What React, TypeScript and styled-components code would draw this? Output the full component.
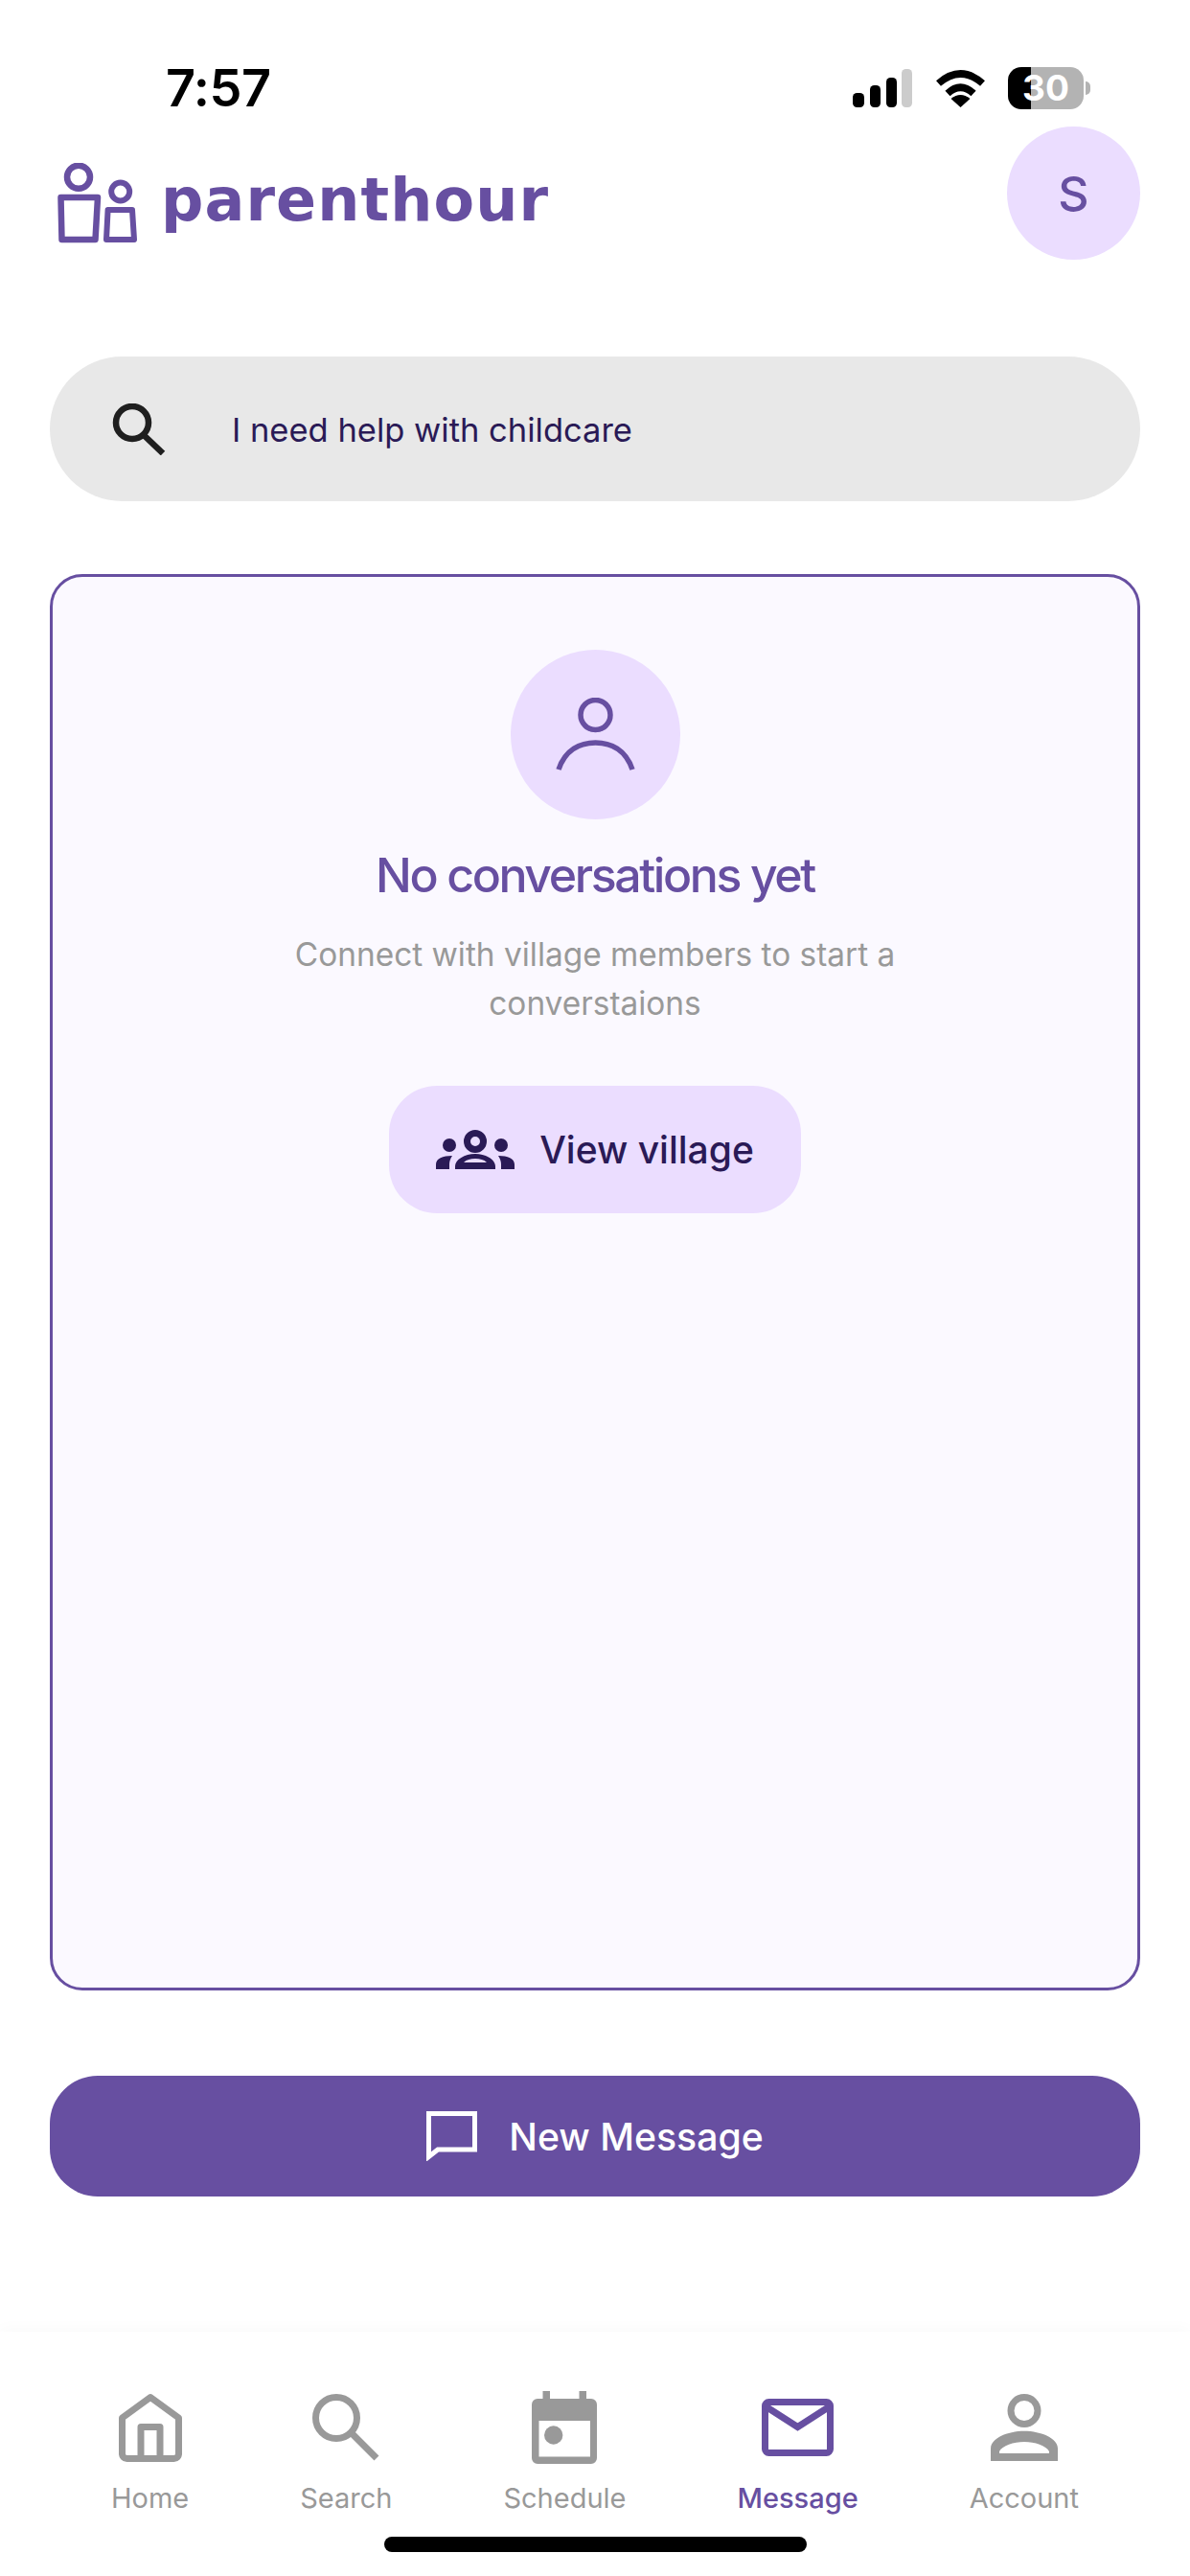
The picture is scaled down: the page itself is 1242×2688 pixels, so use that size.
import React from "react";
import styled, { createGlobalStyle } from "styled-components";

const PURPLE = "#674fa1";
const LILAC = "#ebddff";
const INK = "#2a1a56";
const GREY = "#999999";

const Global = createGlobalStyle`
  html, body { margin: 0; padding: 0; background: #fff; }
  body { font-family: Inter, "Liberation Sans", sans-serif; }
  * { box-sizing: border-box; }
`;

const Page = styled.div`
  width: 1242px;
  height: 2688px;
  display: flex;
  flex-direction: column;
  position: relative;
  overflow: hidden;
  background: #fff;
`;

const StatusBar = styled.div`
  height: 44px;
  margin-top: 70px;
  padding: 0 111px 0 173px;
  display: flex;
  align-items: center;
  justify-content: space-between;
`;

const Time = styled.div`
  font-size: 54px;
  font-weight: 600;
  line-height: 44px;
  color: #000;
  letter-spacing: -0.5px;
`;

const StatusIcons = styled.div`
  display: flex;
  align-items: center;
  gap: 23.5px;
`;

const Battery = styled.div`
  width: 79px;
  height: 44px;
  border-radius: 14px;
  background: linear-gradient(to right, #000 0 24px, #b3b3b3 24px 100%);
  color: #fff;
  font-size: 37px;
  font-weight: 700;
  line-height: 44px;
  text-align: center;
  position: relative;
  &::after {
    content: "";
    position: absolute;
    right: -7px;
    top: 15px;
    width: 5px;
    height: 14px;
    background: #b3b3b3;
    border-radius: 0 5px 5px 0;
  }
`;

const Header = styled.header`
  margin-top: 18px;
  padding: 0 52px 0 58px;
  display: flex;
  justify-content: space-between;
  align-items: flex-start;
`;

const Logo = styled.div`
  margin-top: 38px;
  display: flex;
  align-items: flex-end;
  gap: 24px;
`;

const Wordmark = styled.div`
  font-family: "DejaVu Sans", sans-serif;
  font-size: 62px;
  font-weight: 700;
  line-height: 70px;
  letter-spacing: 1.1px;
  color: ${PURPLE};
  margin-bottom: 10px;
`;

const Avatar = styled.div`
  width: 139px;
  height: 139px;
  border-radius: 50%;
  background: ${LILAC};
  color: ${PURPLE};
  font-size: 50px;
  font-weight: 500;
  display: flex;
  align-items: center;
  justify-content: center;
`;

const SearchBar = styled.div`
  margin: 101px 52px 0;
  height: 151px;
  border-radius: 76px;
  background: #e8e8e8;
  padding: 0 0 0 65px;
  display: flex;
  align-items: center;
  gap: 69px;
`;

const SearchText = styled.span`
  font-size: 34.5px;
  color: ${INK};
  margin-top: 2px;
`;

const Card = styled.section`
  margin: 76px 52px 0;
  height: 1478px;
  border: 3px solid ${PURPLE};
  border-radius: 34px;
  background: #fbf9ff;
  padding-top: 76px;
  display: flex;
  flex-direction: column;
  align-items: center;
`;

const IconCircle = styled.div`
  width: 177px;
  height: 177px;
  border-radius: 50%;
  background: ${LILAC};
  display: flex;
  align-items: center;
  justify-content: center;
`;

const Title = styled.h2`
  margin: 28px 0 0;
  font-size: 50px;
  line-height: 60px;
  font-weight: 500;
  letter-spacing: -2.4px;
  color: ${PURPLE};
`;

const Body = styled.p`
  margin: 28px 0 0;
  width: 680px;
  font-size: 33.4px;
  line-height: 51px;
  text-align: center;
  color: ${GREY};
`;

const VillageButton = styled.button`
  margin-top: 60px;
  width: 430px;
  height: 133px;
  border: none;
  border-radius: 50px;
  background: ${LILAC};
  color: ${INK};
  font-family: inherit;
  font-size: 39px;
  font-weight: 500;
  display: flex;
  align-items: center;
  justify-content: center;
  gap: 26px;
`;

const NewMessage = styled.button`
  margin: 89px 52px 0;
  height: 126px;
  border: none;
  border-radius: 50px;
  background: ${PURPLE};
  color: #fff;
  font-family: inherit;
  font-size: 39.2px;
  font-weight: 500;
  display: flex;
  align-items: center;
  justify-content: center;
  gap: 33px;
`;

const Nav = styled.nav`
  margin-top: 141px;
  height: 255px;
  padding-top: 62px;
  display: flex;
  justify-content: space-evenly;
  align-items: flex-start;
  background: #fff;
  box-shadow: 0 -4px 14px rgba(0, 0, 0, 0.025);
`;

const NavItem = styled.div<{ $active?: boolean }>`
  display: flex;
  flex-direction: column;
  align-items: center;
  gap: 18px;
  font-size: 29px;
  line-height: 36px;
  font-weight: ${(p) => (p.$active ? 500 : 400)};
  color: ${(p) => (p.$active ? PURPLE : GREY)};
`;

const NavIconSlot = styled.div`
  height: 76px;
  display: flex;
  align-items: center;
`;

const HomeBar = styled.div`
  position: absolute;
  left: 401px;
  top: 2647px;
  width: 441px;
  height: 16px;
  border-radius: 8px;
  background: #000;
`;

const LogoMark = () => (
  <svg width="86" height="84" viewBox="0 0 86 84" fill="none" stroke={PURPLE} strokeLinejoin="round">
    <circle cx="24" cy="14.700" r="12" strokeWidth="6.500" />
    <path d="M5.500 36H44L41.500 80H6.500Z" strokeWidth="6.500" />
    <circle cx="67.700" cy="30" r="9.500" strokeWidth="6" />
    <path d="M54.600 49H80L82 80H53Z" strokeWidth="6" />
  </svg>
);

const Signal = () => (
  <svg width="62" height="40" viewBox="0 0 62 40" fill="#000">
    <rect x="0" y="25" width="12" height="15" rx="4.500" />
    <rect x="18" y="17" width="11" height="23" rx="4.500" />
    <rect x="35" y="9" width="11" height="31" rx="4.500" />
    <rect x="51" y="0" width="11" height="40" rx="4.500" fill="#cccccc" />
  </svg>
);

const Wifi = () => (
  <svg width="53" height="40" viewBox="0 0 53 40" fill="none" stroke="#000" strokeWidth="7.500">
    <path d="M3.500 15Q26.500 -5 49.500 15" />
    <path d="M13 25.500Q26.500 13 40 25.500" />
    <path d="M26.500 40L16.500 31Q26.500 23 36.500 31Z" fill="#000" stroke="none" />
  </svg>
);

const SearchGlyph = () => (
  <svg width="56" height="54" viewBox="0 0 56 54" fill="none" stroke="#1f1f1f" strokeWidth="6.500">
    <circle cx="21" cy="20" r="17" />
    <path d="M33 33L53 52" />
  </svg>
);

const PersonGlyph = () => (
  <svg width="83" height="78" viewBox="0 0 83 78" fill="none" stroke={PURPLE} strokeWidth="5.500">
    <circle cx="41.500" cy="18" r="15.500" />
    <path d="M3 75C10 54 26 47 41.500 47C57 47 73 54 80 75" />
  </svg>
);

const GroupGlyph = () => (
  <svg width="82" height="42" viewBox="0 0 82 42" fill={INK} fillRule="evenodd">
    <path d="M41 0a12 12 0 1 0 0 24a12 12 0 1 0 0-24ZM41 7a5 5 0 1 1 0 10a5 5 0 1 1 0-10Z" />
    <circle cx="14" cy="16" r="7" />
    <circle cx="68" cy="16" r="7" />
    <path d="M20 41V38C20 31 30 25 41 25C52 25 62 31 62 38V41ZM29 34H53C50 31 46 30 41 30C36 30 32 31 29 34Z" />
    <path d="M0 41V36C0 30 7 27 17 27C15 30 14 33 14 36V41Z" />
    <path d="M82 41V36C82 30 75 27 65 27C67 30 68 33 68 36V41Z" />
  </svg>
);

const ChatGlyph = () => (
  <svg width="53" height="52" viewBox="0 0 53 52" fill="none" stroke="#fff" strokeWidth="5">
    <path d="M2.500 2.500H50.500V40H12L2.500 47.500Z" />
  </svg>
);

const HomeIcon = () => (
  <svg width="66" height="72" viewBox="0 0 66 72" fill="none" stroke={GREY} strokeWidth="7" strokeLinejoin="round">
    <path d="M33 4.500L62.500 26V63A5 5 0 0 1 57.500 68.500H8.500A5 5 0 0 1 3.500 63V26Z" />
    <path d="M23 68V35.500H43V68" />
  </svg>
);

const SearchIcon = () => (
  <svg width="70" height="70" viewBox="0 0 70 70" fill="none" stroke={GREY} strokeWidth="7">
    <circle cx="25" cy="25" r="21.500" />
    <path d="M41 41L67 67" />
  </svg>
);

const CalendarIcon = () => (
  <svg width="68" height="76" viewBox="0 0 68 76" fill={GREY} fillRule="evenodd">
    <rect x="11.500" y="0" width="7.500" height="12" />
    <rect x="49.500" y="0" width="7.500" height="12" />
    <path d="M6 8H62A6 6 0 0 1 68 14V70A6 6 0 0 1 62 76H6A6 6 0 0 1 0 70V14A6 6 0 0 1 6 8ZM7.500 31V68.500H61V31Z" />
    <circle cx="22.700" cy="46" r="9.700" />
  </svg>
);

const MailIcon = ({ color }: { color: string }) => (
  <svg width="75" height="60" viewBox="0 0 75 60" fill="none" stroke={color} strokeWidth="7">
    <rect x="3.500" y="3.500" width="68" height="53" rx="4" />
    <path d="M4 8L37.500 29.500L71 8" />
  </svg>
);

const AccountIcon = () => (
  <svg width="70" height="70" viewBox="0 0 70 70" fill={GREY} fillRule="evenodd">
    <path d="M35 0a17.500 17.500 0 1 0 0 35a17.500 17.500 0 1 0 0-35ZM35 7a10.500 10.500 0 1 1 0 21a10.500 10.500 0 1 1 0-21Z" />
    <path d="M0 70V57C0 46 18 38.700 35 38.700C52 38.700 70 46 70 57V70ZM9 62H61V60C58 54 46 50 35 50C24 50 12 54 9 60Z" />
  </svg>
);

const tabs = [
  { label: "Home", icon: <HomeIcon /> },
  { label: "Search", icon: <SearchIcon /> },
  { label: "Schedule", icon: <CalendarIcon /> },
  { label: "Message", icon: <MailIcon color={PURPLE} />, active: true },
  { label: "Account", icon: <AccountIcon /> },
];

export default function App() {
  return (
    <Page>
      <Global />
      <StatusBar>
        <Time>7:57</Time>
        <StatusIcons>
          <Signal />
          <Wifi />
          <Battery>30</Battery>
        </StatusIcons>
      </StatusBar>
      <Header>
        <Logo>
          <LogoMark />
          <Wordmark>parenthour</Wordmark>
        </Logo>
        <Avatar>S</Avatar>
      </Header>
      <SearchBar>
        <SearchGlyph />
        <SearchText>I need help with childcare</SearchText>
      </SearchBar>
      <Card>
        <IconCircle>
          <PersonGlyph />
        </IconCircle>
        <Title>No conversations yet</Title>
        <Body>Connect with village members to start a converstaions</Body>
        <VillageButton>
          <GroupGlyph />
          View village
        </VillageButton>
      </Card>
      <NewMessage>
        <ChatGlyph />
        New Message
      </NewMessage>
      <Nav>
        {tabs.map((t) => (
          <NavItem key={t.label} $active={t.active}>
            <NavIconSlot>{t.icon}</NavIconSlot>
            {t.label}
          </NavItem>
        ))}
      </Nav>
      <HomeBar />
    </Page>
  );
}
